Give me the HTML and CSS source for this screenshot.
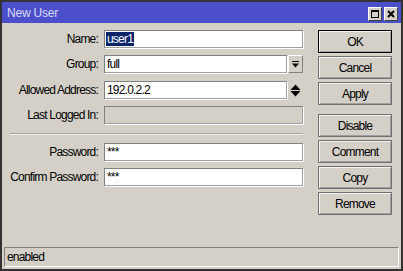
FILE: index.html
```html
<!DOCTYPE html>
<html lang="en">
<head>
    <meta charset="UTF-8">
    <title>New User</title>
    <link rel="stylesheet" href="styles.css">
</head>
<body>
    <div class="window">
        <!-- Title bar -->
        <div class="titlebar">
            <span class="title">New User</span>
            <div class="title-buttons">
                <span class="tbtn">
                    <svg width="10" height="10" viewBox="0 0 10 10"><rect x="1" y="1" width="8" height="2" fill="#000"/><rect x="1.5" y="1.5" width="7" height="7" fill="none" stroke="#000"/></svg>
                </span>
                <span class="tbtn">
                    <svg width="10" height="10" viewBox="0 0 10 10"><path d="M2 2L8 8M8 2L2 8" stroke="#000" stroke-width="2"/></svg>
                </span>
            </div>
        </div>

        <div class="main">
            <!-- Fields -->
            <div class="form">
                <div class="row">
                    <label>Name:</label>
                    <div class="field"><span class="selected">user1</span></div>
                </div>
                <div class="row">
                    <label>Group:</label>
                    <div class="field short">full</div>
                    <span class="drop">
                        <svg width="9" height="9" viewBox="0 0 9 9"><rect x="1" y="1" width="7" height="1" fill="#000"/><path d="M1 3.5h7l-3.5 4z" fill="#000"/></svg>
                    </span>
                </div>
                <div class="row gap-top">
                    <label>Allowed Address:</label>
                    <div class="field short">192.0.2.2</div>
                    <span class="updown">
                        <svg width="11" height="13" viewBox="0 0 11 13"><path d="M5.5 0.5L10.5 6H0.5z M0.5 7H10.5L5.5 12.5z" fill="#000"/></svg>
                    </span>
                </div>
                <div class="row">
                    <label>Last Logged In:</label>
                    <div class="field disabled"></div>
                </div>

                <div class="sep"></div>

                <div class="row">
                    <label>Password:</label>
                    <div class="field">***</div>
                </div>
                <div class="row">
                    <label>Confirm Password:</label>
                    <div class="field">***</div>
                </div>
            </div>

            <!-- Buttons -->
            <div class="buttons">
                <button class="default">OK</button>
                <button>Cancel</button>
                <button>Apply</button>
                <button class="spaced">Disable</button>
                <button>Comment</button>
                <button>Copy</button>
                <button>Remove</button>
            </div>
        </div>

        <div class="status">enabled</div>
    </div>
</body>
</html>
```

FILE: styles.css
```css
*, *::before, *::after {
    box-sizing: border-box;
}

body {
    margin: 0;
    padding: 0;
    font-family: 'Liberation Sans', Arial, sans-serif;
    font-size: 12px;
    letter-spacing: -0.8px;
    color: #000;
}

.window {
    width: 403px;
    height: 271px;
    border: 2px solid #333;
    background: #d4d0c8;
    display: flex;
    flex-direction: column;
}

.titlebar {
    height: 21px;
    background: #4b4fc9;
    display: flex;
    align-items: center;
    justify-content: space-between;
    padding: 0 3px 0 5px;
}

.title {
    color: #dcdcf6;
    font-size: 12px;
    letter-spacing: -0.2px;
}

.title-buttons {
    display: flex;
    gap: 2px;
    margin-top: 2px;
}

.tbtn {
    width: 14px;
    height: 14px;
    background: #d4d0c8;
    border: 1px solid;
    border-color: #fff #404040 #404040 #fff;
    display: flex;
    align-items: center;
    justify-content: center;
}

.main {
    flex: 1;
    display: flex;
    padding-top: 7px;
}

.form {
    width: 301px;
    display: flex;
    flex-direction: column;
    gap: 7px;
}

.row {
    display: flex;
    align-items: center;
    height: 18px;
}

.row.gap-top {
    margin-top: 1px;
}

.row label {
    width: 96px;
    text-align: right;
    margin-right: 6px;
}

.field {
    width: 199px;
    height: 18px;
    background: #fff;
    border: 1px solid;
    border-color: #808080 #a0a0a0 #a0a0a0 #808080;
    box-shadow: 1px 1px 0 #fff;
    padding: 0 2px;
    line-height: 16px;
    white-space: nowrap;
}

.field.short {
    width: 183px;
}

.field.disabled {
    background: #d4d0c8;
}

.selected {
    background: #0a246a;
    color: #fff;
    margin-left: -1px;
    padding: 0 1px;
}

.drop {
    width: 15px;
    height: 18px;
    margin-left: 1px;
    border: 1px solid;
    border-color: #fff #808080 #808080 #fff;
    display: flex;
    align-items: center;
    justify-content: center;
}

.updown {
    width: 15px;
    margin-left: 1px;
    display: flex;
    justify-content: center;
}

.sep {
    margin: 2px 0 1px 8px;
    height: 2px;
    border-top: 1px solid #a8a49c;
    border-bottom: 1px solid #f4f2ee;
}

.buttons {
    margin-left: 15px;
    display: flex;
    flex-direction: column;
    gap: 3px;
}

button {
    width: 74px;
    height: 23px;
    background: #d4d0c8;
    border: 1px solid #707070;
    box-shadow: inset 1px 1px 0 #f4f2ee, inset -1px -1px 0 #a0a0a0;
    font-family: inherit;
    font-size: 12px;
    letter-spacing: -0.8px;
    color: #000;
    padding: 0;
}

button.default {
    border-color: #000;
}

button.spaced {
    margin-top: 6px;
}

.status {
    height: 20px;
    margin: 0 2px 2px 2px;
    border: 1px solid;
    border-color: #808080 #fff #fff #808080;
    padding-left: 2px;
    line-height: 18px;
}
```
